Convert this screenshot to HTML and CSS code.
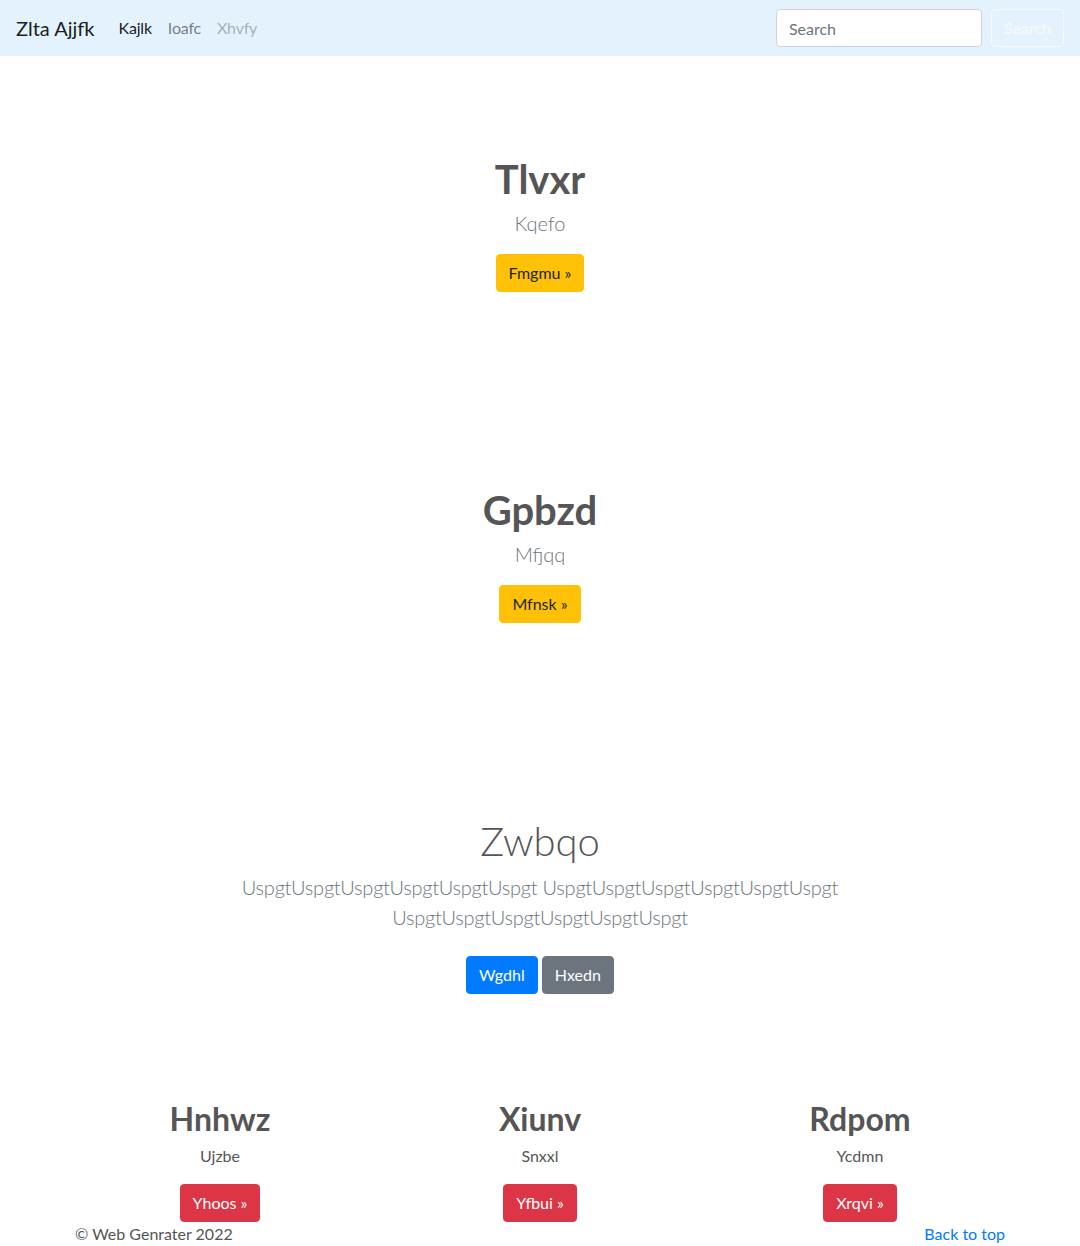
FILE: index.html
```html
<!DOCTYPE html>
<html lang="en">
<head>
<meta charset="utf-8">
<title>Zlta Ajjfk</title>
<link rel="stylesheet" href="styles.css">
</head>
<body>
<nav class="navbar">
  <a class="brand" href="#">Zlta Ajjfk</a>
  <ul class="nav">
    <li><a class="nav-link active" href="#">Kajlk</a></li>
    <li><a class="nav-link" href="#">Ioafc</a></li>
    <li><a class="nav-link disabled" href="#">Xhvfy</a></li>
  </ul>
  <form class="search">
    <input class="search-input" type="search" placeholder="Search">
    <button class="btn btn-outline-light" type="button">Search</button>
  </form>
</nav>

<main>
  <section class="hero">
    <h1 class="hero-title">Tlvxr</h1>
    <p class="lead muted">Kqefo</p>
    <p class="actions"><a class="btn btn-warning" href="#">Fmgmu &raquo;</a></p>
  </section>

  <section class="hero">
    <h1 class="hero-title">Gpbzd</h1>
    <p class="lead muted">Mfjqq</p>
    <p class="actions"><a class="btn btn-warning" href="#">Mfnsk &raquo;</a></p>
  </section>

  <section class="album">
    <div class="album-inner">
      <h1 class="album-title">Zwbqo</h1>
      <p class="lead muted album-lead">UspgtUspgtUspgtUspgtUspgtUspgt UspgtUspgtUspgtUspgtUspgtUspgt UspgtUspgtUspgtUspgtUspgtUspgt</p>
      <p class="album-actions">
        <a class="btn btn-primary" href="#">Wgdhl</a>
        <a class="btn btn-secondary" href="#">Hxedn</a>
      </p>
    </div>
  </section>

  <div class="container">
    <div class="cols">
      <div class="col">
        <h2 class="col-title">Hnhwz</h2>
        <p class="col-text">Ujzbe</p>
        <p class="col-actions"><a class="btn btn-danger" href="#">Yhoos &raquo;</a></p>
      </div>
      <div class="col">
        <h2 class="col-title">Xiunv</h2>
        <p class="col-text">Snxxl</p>
        <p class="col-actions"><a class="btn btn-danger" href="#">Yfbui &raquo;</a></p>
      </div>
      <div class="col">
        <h2 class="col-title">Rdpom</h2>
        <p class="col-text">Ycdmn</p>
        <p class="col-actions"><a class="btn btn-danger" href="#">Xrqvi &raquo;</a></p>
      </div>
    </div>
  </div>

  <footer class="container footer">
    <p class="copy">&copy; Web Genrater 2022</p>
    <a class="top-link" href="#">Back to top</a>
  </footer>
</main>
</body>
</html>
```

FILE: styles.css
```css
* { box-sizing: border-box; }

html, body {
  margin: 0;
  padding: 0;
}

body {
  font-family: "Lato", "Open Sans", "Liberation Sans", sans-serif;
  font-size: 16px;
  line-height: 1.5;
  color: #555;
  background: #fff;
}

a { text-decoration: none; }

p { margin: 0; }
h1, h2 { margin: 0; }

/* navbar */
.navbar {
  display: flex;
  align-items: center;
  height: 56px;
  padding: 8px 16px;
  background: #e3f2fd;
}

.brand {
  font-size: 20px;
  line-height: 30px;
  color: rgba(0, 0, 0, 0.9);
  margin-right: 16px;
  padding: 5px 0;
}

.nav {
  display: flex;
  list-style: none;
  margin: 0;
  padding: 0;
  flex: 1;
}

.nav-link {
  display: block;
  padding: 8px;
  color: rgba(0, 0, 0, 0.5);
  letter-spacing: -0.2px;
}
.nav-link.active { color: rgba(0, 0, 0, 0.9); }
.nav-link.disabled { color: rgba(0, 0, 0, 0.3); }

.search {
  display: flex;
  align-items: center;
}

.search-input {
  width: 206px;
  height: 38px;
  padding: 6px 12px;
  font: inherit;
  color: #495057;
  background: #fff;
  border: 1px solid #ced4da;
  border-radius: 4px;
  margin-right: 9px;
}
.search-input::placeholder { color: #6c757d; }

/* buttons */
.btn {
  display: inline-block;
  font: inherit;
  font-size: 16px;
  line-height: 24px;
  padding: 6px 12px;
  border: 1px solid transparent;
  border-radius: 4px;
  text-align: center;
  cursor: pointer;
}
.btn-outline-light {
  color: #f8f9fa;
  background: transparent;
  border-color: #f8f9fa;
}
.btn-warning { color: #212529; background: #ffc107; border-color: #ffc107; }
.btn-primary { color: #fff; background: #007bff; border-color: #007bff; }
.btn-secondary { color: #fff; background: #6c757d; border-color: #6c757d; }
.btn-danger { color: #fff; background: #dc3545; border-color: #dc3545; }

/* heroes */
.hero {
  text-align: center;
  padding: 99px 0 95px;
}

.hero-title {
  font-size: 40px;
  font-weight: 700;
  line-height: 48px;
  color: #555;
  margin-bottom: 5px;
}

.lead {
  font-size: 20px;
  font-weight: 300;
  line-height: 30px;
}
.muted { color: #6c757d; }

.actions { margin-top: 16px; }

/* album */
.album {
  text-align: center;
  padding: 99px 0 0;
}
.album-inner {
  max-width: 640px;
  margin: 0 auto;
  padding: 0 12px;
}
.album-title {
  font-size: 40px;
  font-weight: 300;
  line-height: 48px;
  color: #555;
  margin-bottom: 7px;
}
.album-lead {
  margin-bottom: 16px;
  letter-spacing: -0.25px;
}
.album-actions {
  padding-top: 8px;
}

/* columns */
.container {
  max-width: 960px;
  margin: 0 auto;
  padding: 0 15px;
}

.cols {
  display: grid;
  grid-template-columns: repeat(3, 1fr);
  margin: 0 -15px;
  padding-top: 106px;
}

.col {
  text-align: center;
  padding: 0 15px;
}

.col-title {
  font-size: 32px;
  font-weight: 700;
  line-height: 38px;
  color: #555;
  margin-bottom: 6px;
}

.col-text { margin-bottom: 16px; }

/* footer */
.footer {
  display: flex;
  justify-content: space-between;
  align-items: center;
}
.copy { color: #555; }
.top-link { color: #007bff; }
```
